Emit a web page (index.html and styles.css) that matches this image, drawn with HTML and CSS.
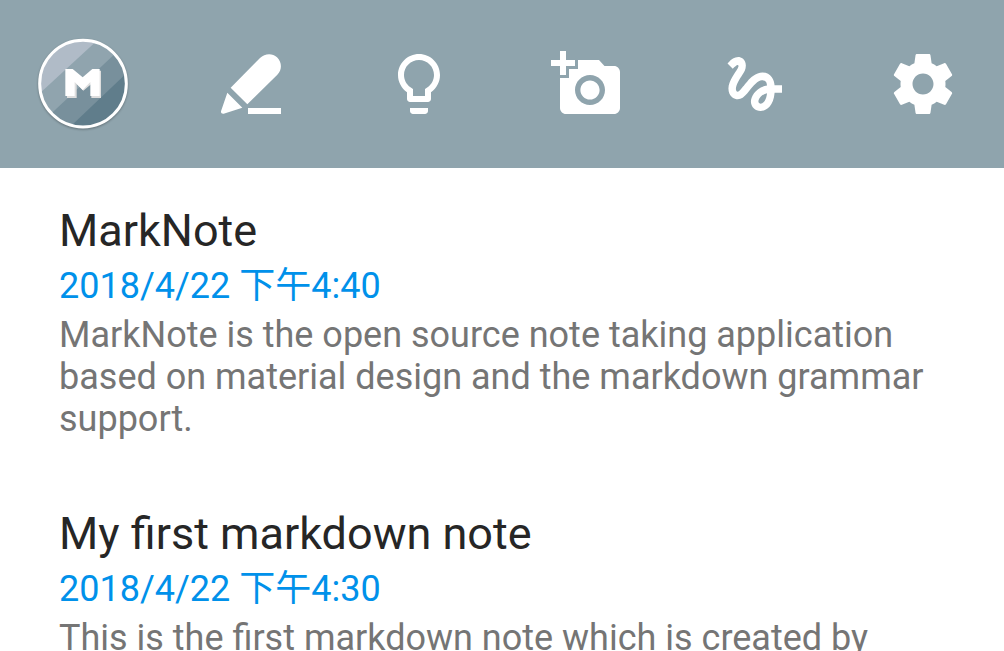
FILE: index.html
```html
<!DOCTYPE html>
<html lang="zh">
<head>
<meta charset="utf-8">
<meta name="viewport" content="width=device-width, initial-scale=1">
<title>MarkNote</title>
<link rel="stylesheet" href="styles.css">
</head>
<body>
<div class="widget">
<header class="toolbar">
<button class="tool" type="button" aria-label="MarkNote">
<svg class="logo" viewBox="15 18 288 288" aria-hidden="true">
<defs><clipPath id="disc"><circle cx="159" cy="161" r="131"/></clipPath></defs>
<g clip-path="url(#disc)">
<path fill="#b0bbc7" d="M15 18h288v288H15z"/>
<path fill="#90a4ae" d="M15 203L216 18h87v288H15z"/>
<path fill="#78909c" d="M15 296L303 26v280H15z"/>
<path fill="#607d8b" d="M104 306L303 117v189z"/>
</g>
<circle cx="159" cy="161" r="130" fill="none" stroke="#fff" stroke-width="9"/>
<path fill="#dedede" d="M111 122h19l30 24 31-24h22v82h-29v-42l-24 20-20-20v42h-29z"/>
<path fill="#fff" d="M106 117h22l30 25 29-25h22v81h-28v-42l-23 24-24-24v42h-28z"/>
</svg>
</button>
<button class="tool" type="button" aria-label="New note">
<svg class="icon" viewBox="15 24 216 216" aria-hidden="true"><path d="M62 143l88-89c14-14 37-16 51-2 15 15 16 37 1 52l-90 89zM52 158l45 45-56 18c-5 1-9-2-8-7zM114 204h99v18h-99z"/></svg>
</button>
<button class="tool" type="button" aria-label="New idea">
<svg class="icon" viewBox="0 0 24 24" aria-hidden="true"><path d="M9 21c0 .55.45 1 1 1h4c.55 0 1-.45 1-1v-1H9v1zm3-19C8.14 2 5 5.14 5 9c0 2.38 1.19 4.47 3 5.74V17c0 .55.45 1 1 1h6c.55 0 1-.45 1-1v-2.26c1.81-1.27 3-3.36 3-5.74 0-3.86-3.14-7-7-7zm2.85 11.1l-.85.6V16h-4v-2.3l-.85-.6C7.8 12.16 7 10.63 7 9c0-2.76 2.24-5 5-5s5 2.24 5 5c0 1.63-.8 3.16-2.15 4.1z"/></svg>
</button>
<button class="tool" type="button" aria-label="Add photo">
<svg class="icon" viewBox="0 0 24 24" aria-hidden="true"><path d="M3 4V1h2v3h3v2H5v3H3V6H0V4h3zm3 6V7h3V4h7l1.83 2H21c1.1 0 2 .9 2 2v12c0 1.1-.9 2-2 2H5c-1.1 0-2-.9-2-2V10h3zm7 9c2.76 0 5-2.24 5-5s-2.24-5-5-5-5 2.24-5 5 2.24 5 5 5zm-3.2-5c0 1.77 1.43 3.2 3.2 3.2s3.2-1.43 3.2-3.2-1.43-3.2-3.2-3.2-3.2 1.43-3.2 3.2z"/></svg>
</button>
<button class="tool" type="button" aria-label="Sketch">
<svg class="icon" viewBox="0 0 24 24" aria-hidden="true"><path d="M4.59 6.89c.7-.71 1.4-1.35 1.71-1.22.5.2 0 1.03-.3 1.52-.25.42-2.86 3.89-2.86 6.31 0 1.28.48 2.34 1.34 2.98.75.56 1.74.73 2.64.46 1.07-.31 1.95-1.4 3.06-2.77 1.21-1.49 2.83-3.44 4.08-3.44 1.63 0 1.65 1.01 1.76 1.79-3.78.64-5.38 3.67-5.38 5.37 0 1.7 1.44 3.09 3.21 3.09 1.63 0 4.29-1.33 4.69-6.1H21v-2.5h-2.47c-.15-1.65-1.09-4.2-4.03-4.2-2.25 0-4.18 1.91-4.94 2.84-.58.73-2.06 2.48-2.29 2.72-.25.3-.68.84-1.11.84-.45 0-.72-.83-.36-1.92.35-1.09 1.4-2.86 1.85-3.52.78-1.14 1.3-1.92 1.3-3.28C8.95 3.69 7.31 3 6.44 3 5.12 3 3.97 4 3.72 4.25c-.36.36-.66.66-.88.93l1.75 1.71zm9.29 11.66c-.31 0-.74-.26-.74-.72 0-.6.73-2.2 2.87-2.76-.3 2.69-1.43 3.48-2.13 3.48z"/></svg>
</button>
<button class="tool" type="button" aria-label="Settings">
<svg class="icon" viewBox="0 0 24 24" aria-hidden="true"><path d="M19.43 12.98c.04-.32.07-.64.07-.98s-.03-.66-.07-.98l2.11-1.65c.19-.15.24-.42.12-.64l-2-3.46c-.12-.22-.39-.3-.61-.22l-2.49 1c-.52-.4-1.08-.73-1.69-.98l-.38-2.65C14.46 2.18 14.25 2 14 2h-4c-.25 0-.46.18-.49.42l-.38 2.65c-.61.25-1.17.59-1.69.98l-2.49-1c-.23-.09-.49 0-.61.22l-2 3.46c-.13.22-.07.49.12.64l2.11 1.65c-.04.32-.07.65-.07.98s.03.66.07.98l-2.11 1.65c-.19.15-.24.42-.12.64l2 3.46c.12.22.39.3.61.22l2.49-1c.52.4 1.08.73 1.69.98l.38 2.65c.03.24.24.42.49.42h4c.25 0 .46-.18.49-.42l.38-2.65c.61-.25 1.17-.59 1.69-.98l2.49 1c.23.09.49 0 .61-.22l2-3.46c.12-.22.07-.49-.12-.64l-2.11-1.65zM12 15.5c-1.93 0-3.5-1.57-3.5-3.5s1.57-3.5 3.5-3.5 3.5 1.57 3.5 3.5-1.57 3.5-3.5 3.5z"/></svg>
</button>
</header>
<main class="notes">
<article class="note">
<h2 class="title">MarkNote</h2>
<time class="date" datetime="2018-04-22T16:40">2018/4/22 下午4:40</time>
<p class="excerpt">MarkNote is the open source note taking application based on material design and the markdown grammar support.</p>
</article>
<article class="note">
<h2 class="title">My first markdown note</h2>
<time class="date" datetime="2018-04-22T16:30">2018/4/22 下午4:30</time>
<p class="excerpt">This is the first markdown note which is created by</p>
</article>
</main>
</div>
</body>
</html>
```
FILE: styles.css
```css
body {
  margin: 0;
  background: #fff;
  font-family: Roboto, "Noto Sans CJK SC", sans-serif;
}

.widget {
  display: flex;
  flex-direction: column;
  height: 100vh;
  overflow: hidden;
}

.toolbar {
  display: flex;
  flex: none;
  justify-content: space-between;
  padding: 36px 33px 36px 35px;
  background: #8fa4ad;
}

.tool {
  display: grid;
  place-items: center;
  width: 96px;
  height: 96px;
  padding: 0;
  border: 0;
  background: none;
}

.icon {
  width: 72px;
  height: 72px;
  fill: #fff;
}

.logo {
  width: 96px;
  height: 96px;
  filter: drop-shadow(0 1px 1px rgba(0, 0, 0, 0.3));
}

.notes {
  flex: 1;
  min-height: 0;
  overflow: hidden;
}

.note {
  padding: 36px 59px 31px;
}

.title {
  margin: 0;
  color: #262626;
  font-size: 45px;
  font-weight: 400;
  line-height: 53px;
}

.date {
  display: block;
  margin-top: 8px;
  color: #0091ea;
  font-size: 36px;
  line-height: 42px;
}

.excerpt {
  margin: 7px 0 0;
  color: #757575;
  font-size: 36px;
  line-height: 42px;
}
```
